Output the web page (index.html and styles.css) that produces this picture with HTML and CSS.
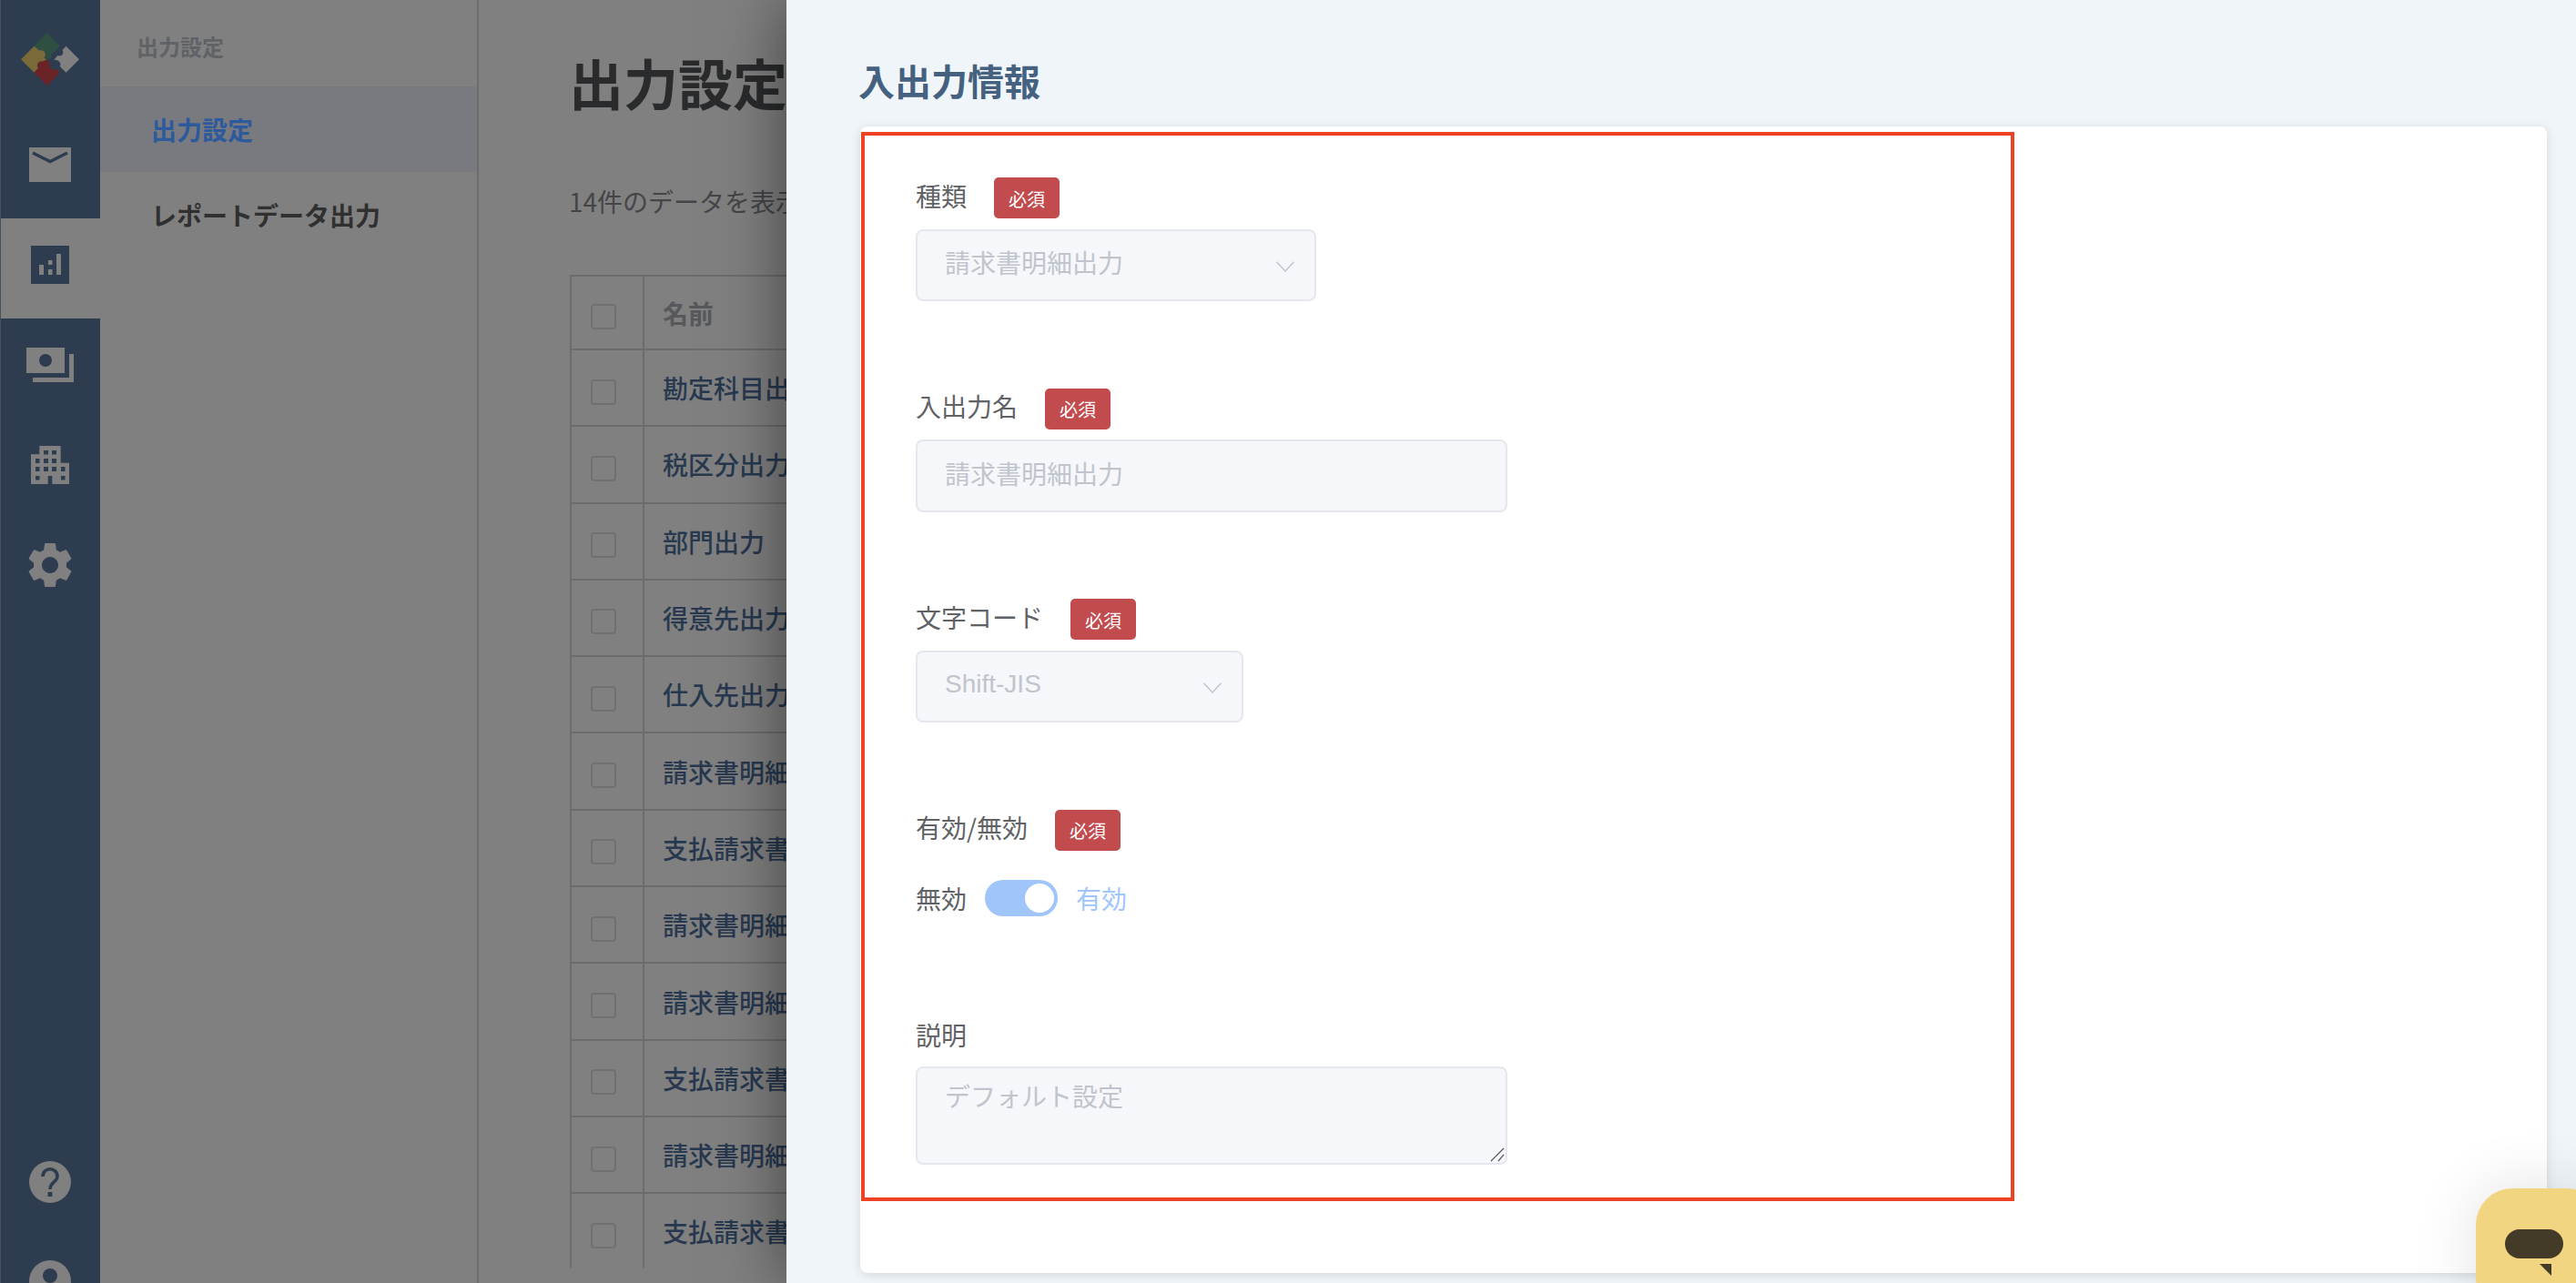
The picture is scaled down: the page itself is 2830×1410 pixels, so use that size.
FILE: index.html
```html
<!DOCTYPE html>
<html lang="ja">
<head>
<meta charset="utf-8">
<title>出力設定</title>
<link rel="stylesheet" href="styles.css">
</head>
<body>
<div class="app">
  <aside class="rail">
    <div class="rail-logo">
      <svg width="64" height="58" viewBox="70 48 190 172">
        <path fill="#2f5040" d="M155 48L197 92L178 111C168 110 165 122 172 128L155 135L150 128C158 116 148 100 130 106L113 92Z"/>
        <path fill="#7a6a38" d="M113 92L130 106C148 100 155 118 146 130L155 135L141 142C128 138 118 152 127 163L113 178L70 135Z"/>
        <path fill="#6a2428" d="M155 135L165 147C160 160 172 172 184 165L197 178L155 220L113 178L127 163C118 152 128 138 141 142Z"/>
        <path fill="#808080" d="M217 92L260 135L217 178L197 158C205 148 190 132 177 137L190 122C205 128 212 112 205 104Z"/>
      </svg>
    </div>
    <nav class="rail-nav">
      <a class="rail-item">
        <svg width="46" height="38" viewBox="0 0 46 38"><path fill="#808080" d="M0 0H46V38H0Z"/><path fill="none" stroke="#2e3c50" stroke-width="3.400" d="M4 6L23 15.500L42 6"/></svg>
      </a>
      <a class="rail-item is-active">
        <svg width="42" height="42" viewBox="0 0 42 42"><path fill="#2e3c50" d="M0 0H42V42H0Z"/><path fill="#808080" d="M9 21H14V32H9ZM19 16H23.500V21H19ZM19 26H23.500V32H19ZM28 9H33V32H28Z"/></svg>
      </a>
      <a class="rail-item">
        <svg width="52" height="38" viewBox="0 0 52 38"><path fill="#808080" fill-rule="evenodd" d="M0 0H42V28H0ZM21 7A7 7 0 1 0 21 21A7 7 0 1 0 21 7Z"/><path fill="#808080" d="M47 7H52V38H7V33H47Z"/></svg>
      </a>
      <a class="rail-item">
        <svg width="42" height="42" viewBox="0 0 42 42"><path fill="#808080" d="M9.300 0H32.700V18.700H42V42H23.300V33H18.700V42H0V9.300H9.300Z"/><path fill="#2e3c50" d="M14 5H19V9.500H14ZM23 5H28V9.500H23ZM5 14H9.500V19H5ZM14 14H19V19H14ZM23 14H28V19H23ZM5 23H9.500V28H5ZM14 23H19V28H14ZM23 23H28V28H23ZM33 23H37.500V28H33ZM5 33H9.500V37.500H5ZM33 33H37.500V37.500H33Z"/></svg>
      </a>
      <a class="rail-item">
        <svg width="60" height="60" viewBox="0 0 24 24"><path fill="#808080" d="M19.140 12.940c.04-.3.06-.61.06-.94 0-.32-.02-.64-.07-.94l2.030-1.580c.18-.14.23-.41.12-.61l-1.920-3.320c-.12-.22-.37-.29-.59-.22l-2.390.96c-.5-.38-1.030-.7-1.620-.94l-.36-2.540c-.04-.24-.24-.41-.48-.41h-3.840c-.24 0-.43.17-.47.41l-.36 2.540c-.59.24-1.130.57-1.620.94l-2.390-.96c-.22-.08-.47 0-.59.22L2.740 8.870c-.12.21-.08.47.12.61l2.030 1.580c-.05.3-.09.63-.09.94s.02.64.07.94l-2.030 1.580c-.18.14-.23.41-.12.61l1.920 3.320c.12.22.37.29.59.22l2.390-.96c.5.38 1.030.7 1.620.94l.36 2.540c.05.24.24.41.48.41h3.840c.24 0 .44-.17.47-.41l.36-2.540c.59-.24 1.130-.56 1.620-.94l2.390.96c.22.08.47 0 .59-.22l1.920-3.320c.12-.22.07-.47-.12-.61l-2.010-1.580zM12 15.600c-1.980 0-3.600-1.620-3.600-3.600s1.620-3.600 3.600-3.600 3.600 1.620 3.600 3.600-1.620 3.600-3.600 3.600z"/></svg>
      </a>
    </nav>
    <div class="rail-foot">
      <svg width="46" height="46" viewBox="0 0 46 46"><circle cx="23" cy="23" r="23" fill="#808080"/><path fill="none" stroke="#2e3c50" stroke-width="3.600" d="M15 17C15 6 31 6 31 17C31 23 23 23 23 31"/><path fill="#2e3c50" d="M20.500 34H25.500V39H20.500Z"/></svg>
      <svg width="46" height="46" viewBox="0 0 46 46"><circle cx="23" cy="23" r="23" fill="#808080"/><circle cx="23" cy="17" r="8" fill="#2e3c50"/><path fill="#2e3c50" d="M9 36C11 27 35 27 37 36C30 43 16 43 9 36Z"/></svg>
    </div>
  </aside>

  <aside class="subnav">
    <div class="subnav-title">出力設定</div>
    <a class="subnav-item is-active">出力設定</a>
    <a class="subnav-item">レポートデータ出力</a>
  </aside>

  <main class="main">
    <h1 class="main-title">出力設定</h1>
    <p class="main-count">14件のデータを表示</p>
    <div class="table-clip">
      <table class="data">
        <thead>
          <tr><th class="col-check"><span class="check"></span></th><th>名前</th></tr>
        </thead>
        <tbody>
          <tr><td class="col-check"><span class="check"></span></td><td>勘定科目出力</td></tr>
          <tr><td class="col-check"><span class="check"></span></td><td>税区分出力</td></tr>
          <tr><td class="col-check"><span class="check"></span></td><td>部門出力</td></tr>
          <tr><td class="col-check"><span class="check"></span></td><td>得意先出力</td></tr>
          <tr><td class="col-check"><span class="check"></span></td><td>仕入先出力</td></tr>
          <tr><td class="col-check"><span class="check"></span></td><td>請求書明細出力</td></tr>
          <tr><td class="col-check"><span class="check"></span></td><td>支払請求書出力</td></tr>
          <tr><td class="col-check"><span class="check"></span></td><td>請求書明細出力</td></tr>
          <tr><td class="col-check"><span class="check"></span></td><td>請求書明細出力</td></tr>
          <tr><td class="col-check"><span class="check"></span></td><td>支払請求書出力</td></tr>
          <tr><td class="col-check"><span class="check"></span></td><td>請求書明細出力</td></tr>
          <tr><td class="col-check"><span class="check"></span></td><td>支払請求書出力</td></tr>
        </tbody>
      </table>
    </div>
  </main>
</div>

<section class="drawer">
  <h2 class="drawer-title">入出力情報</h2>
  <div class="card">
    <div class="highlight"></div>
    <form class="form">
      <div class="field">
        <div class="field-head"><label class="field-label">種類</label><span class="badge">必須</span></div>
        <div class="control control-type"><span class="control-text">請求書明細出力</span><svg class="chevron" width="20" height="12" viewBox="0 0 20 12"><path d="M0.500 0.700L10 11L19.500 0.700"/></svg></div>
      </div>
      <div class="field">
        <div class="field-head"><label class="field-label">入出力名</label><span class="badge">必須</span></div>
        <div class="control control-wide"><span class="control-text">請求書明細出力</span></div>
      </div>
      <div class="field">
        <div class="field-head"><label class="field-label">文字コード</label><span class="badge">必須</span></div>
        <div class="control control-code"><span class="control-text control-latin">Shift-JIS</span><svg class="chevron" width="20" height="12" viewBox="0 0 20 12"><path d="M0.500 0.700L10 11L19.500 0.700"/></svg></div>
      </div>
      <div class="field field-toggle">
        <div class="field-head"><label class="field-label">有効/無効</label><span class="badge">必須</span></div>
        <div class="toggle-row">
          <span class="toggle-off">無効</span>
          <span class="toggle"><span class="toggle-knob"></span></span>
          <span class="toggle-on">有効</span>
        </div>
      </div>
      <div class="field field-note">
        <div class="field-head"><label class="field-label">説明</label></div>
        <div class="note-wrap">
          <textarea class="note" readonly>デフォルト設定</textarea>
          <svg class="note-grip" width="16" height="16" viewBox="0 0 16 16"><path d="M1 15L15 1M9 15L15 8"/></svg>
        </div>
      </div>
    </form>
  </div>
</section>

<div class="chat">
  <svg width="64" height="52" viewBox="0 0 64 52"><rect x="0" y="0" width="64" height="32" rx="16" fill="#433b27"/><path fill="#433b27" d="M38 38H51V51Z"/></svg>
</div>
</body>
</html>
```
FILE: styles.css
```css
* { box-sizing: border-box; }
html, body { margin: 0; height: 100%; overflow: hidden; }
body {
  background: #808080;
  font-family: "Noto Sans CJK JP", "Noto Sans", sans-serif;
  color: #303030;
}

.app { display: flex; height: 1410px; }

/* icon rail */
.rail {
  width: 110px;
  flex: none;
  height: 1410px;
  overflow: hidden;
  background: #2e3c50;
  box-shadow: inset 1px 0 0 #46525f;
  display: flex;
  flex-direction: column;
}
.rail-logo { height: 130px; padding: 36px 0 0 23px; }
.rail-logo svg { display: block; }
.rail-nav { display: flex; flex-direction: column; }
.rail-item {
  height: 110px;
  padding-bottom: 8px;
  display: flex;
  align-items: center;
  justify-content: center;
}
.rail-item.is-active { background: #808080; margin-left: 1px; padding-right: 1px; }
.rail-item svg { display: block; }
.rail-foot {
  margin-top: auto;
  margin-bottom: -21px;
  display: flex;
  flex-direction: column;
  align-items: center;
  gap: 63px;
}
.rail-foot svg { display: block; flex: none; }

/* secondary nav */
.subnav {
  width: 416px;
  flex: none;
  border-right: 2px solid #6c6c6c;
  display: flex;
  flex-direction: column;
}
.subnav-title {
  height: 95px;
  padding: 6px 0 0 40px;
  display: flex;
  align-items: center;
  font-size: 24px;
  font-weight: 700;
  color: #5f6267;
}
.subnav-item {
  height: 94px;
  padding: 0 0 0 56px;
  display: flex;
  align-items: center;
  font-size: 28px;
  font-weight: 700;
  color: #303030;
}
.subnav-item.is-active { background: #797a7f; color: #2c5a9c; }

/* main listing */
.main { flex: 1; min-width: 0; padding: 60px 0 0 100px; overflow: hidden; }
.main-title {
  margin: 0 0 0 -1px;
  font-size: 60px;
  line-height: 60px;
  font-weight: 700;
  color: #2a2b2d;
  white-space: nowrap;
}
.main-count {
  margin: 81px 0 0 -1px;
  font-size: 28px;
  line-height: 40px;
  color: #444548;
  white-space: nowrap;
}
.table-clip { margin-top: 61px; height: 1091px; overflow: hidden; }
.data { border-collapse: collapse; width: 1500px; table-layout: fixed; }
.data th, .data td {
  border: 2px solid #6c6c6e;
  padding: 0 0 0 20px;
  font-size: 28px;
  text-align: left;
  white-space: nowrap;
}
.data th { height: 81px; font-weight: 700; color: #56585c; }
.data td { height: 84.300px; font-weight: 500; color: #27384f; }
.data .col-check { width: 80px; padding: 0 0 0 21px; }
.check {
  display: inline-block;
  width: 28px;
  height: 28px;
  vertical-align: middle;
  border: 2px solid #6e7074;
  border-radius: 4px;
}

/* drawer */
.drawer {
  position: absolute;
  top: 0;
  right: 0;
  bottom: 0;
  left: 864px;
  padding: 64px 32px 0 81px;
  background: #f0f5fa;
  box-shadow: 0 0 70px rgba(0, 0, 0, 0.5);
}
.drawer-title {
  margin: 0 0 27px -2px;
  font-size: 40px;
  line-height: 48px;
  font-weight: 700;
  color: #44617f;
}
.card {
  position: relative;
  height: 1260px;
  background: #fff;
  border-radius: 8px;
  box-shadow: 0 2px 12px rgba(0, 0, 0, 0.12);
}
.highlight {
  position: absolute;
  left: 1px;
  top: 6px;
  width: 1267px;
  height: 1175px;
  border: 4px solid #ef4123;
  pointer-events: none;
}
.form {
  padding: 56px 0 0 61px;
  display: flex;
  flex-direction: column;
  gap: 95.500px;
}
.field-head {
  height: 45px;
  margin-bottom: 11.500px;
  display: flex;
  align-items: center;
  gap: 30px;
}
.field-label {
  font-size: 28px;
  line-height: 40px;
  margin-top: -6px;
  color: #606266;
}
.field-note .field-label { margin-top: -2px; }
.badge {
  width: 72px;
  height: 45px;
  display: flex;
  align-items: center;
  justify-content: center;
  border-radius: 5px;
  background: #c24b4e;
  color: #fff;
  font-size: 20px;
  line-height: 1;
  padding-top: 2px;
}
.control {
  height: 79.500px;
  padding: 0 22px 0 30px;
  display: flex;
  align-items: center;
  justify-content: space-between;
  background: #f5f7fa;
  border: 2px solid #e4e7ed;
  border-radius: 8px;
}
.control-type { width: 440px; }
.control-wide { width: 650px; }
.control-code { width: 360px; }
.control-text {
  font-size: 28px;
  line-height: 40px;
  margin-top: -6px;
  color: #c0c4cc;
}
.control-latin { font-family: "Liberation Sans", sans-serif; margin-top: -4px; }
.chevron { fill: none; stroke: #c0c4cc; stroke-width: 1.500; flex: none; margin-top: 4px; }

.field-toggle { margin-bottom: 13px; }
.toggle-row {
  display: flex;
  align-items: center;
  gap: 20px;
  margin-top: 32px;
  height: 40px;
  font-size: 28px;
}
.field-toggle .field-head { margin-bottom: 0; }
.toggle-off { color: #606266; }
.toggle-on { color: #9fc5fb; }
.toggle {
  position: relative;
  width: 80px;
  height: 40px;
  border-radius: 20px;
  background: #a0c5fb;
}
.toggle-knob {
  position: absolute;
  top: 4px;
  right: 4px;
  width: 32px;
  height: 32px;
  border-radius: 50%;
  background: #fff;
}
.note-wrap { position: relative; width: 650px; height: 108px; }
.note {
  display: block;
  width: 650px;
  height: 108px;
  margin: 0;
  padding: 10px 30px;
  background: #f5f7fa;
  border: 2px solid #e4e7ed;
  border-radius: 8px;
  font-family: inherit;
  font-size: 28px;
  line-height: 40px;
  color: #c0c4cc;
  outline: none;
  resize: none;
}
.note-grip {
  position: absolute;
  right: 3px;
  bottom: 3px;
  fill: none;
  stroke: #555;
  stroke-width: 1.200;
}

/* support widget */
.chat {
  position: absolute;
  left: 2720px;
  top: 1306px;
  width: 140px;
  height: 140px;
  padding: 45px 0 0 32px;
  border-radius: 40px;
  background: #f1d581;
  box-shadow: 0 0 70px rgba(0, 0, 0, 0.12);
}
.chat svg { display: block; }
```
